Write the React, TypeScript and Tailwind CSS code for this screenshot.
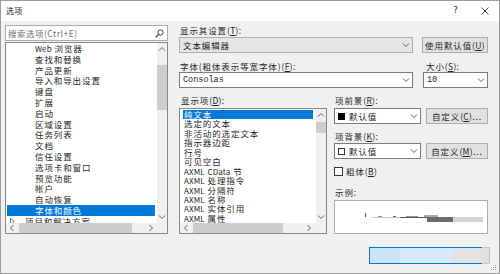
import React from "react";

type Dir = "up" | "down" | "left" | "right";

const paths: Record<Dir, string> = {
  down: "M1 2.5l3 3 3-3",
  up: "M1 5.5l3-3 3 3",
  left: "M5.5 1L2.5 4l3 3",
  right: "M2.5 1l3 3-3 3",
};

const Arrow = ({ dir, color = "#606060" }: { dir: Dir; color?: string }) => (
  <svg width="8" height="8" viewBox="0 0 8 8">
    <path d={paths[dir]} fill="none" stroke={color} strokeWidth="1" />
  </svg>
);

const Acc = ({ k }: { k: string }) => (
  <span className="tracking-[0.3px]">
    (<span className="underline">{k}</span>)
  </span>
);

const treeItems = [
  "Web 浏览器",
  "查找和替换",
  "产品更新",
  "导入和导出设置",
  "键盘",
  "扩展",
  "启动",
  "区域设置",
  "任务列表",
  "文档",
  "信任设置",
  "选项卡和窗口",
  "预览功能",
  "帐户",
  "自动恢复",
  "字体和颜色",
];

const displayItems = [
  "纯文本",
  "选定的文本",
  "非活动的选定文本",
  "指示器边距",
  "行号",
  "可见空白",
  "AXML CData 节",
  "AXML 处理指令",
  "AXML 分隔符",
  "AXML 名称",
  "AXML 实体引用",
  "AXML 属性",
];

// latin bits are narrower in the reference than the CJK glyphs
const Mixed = ({ text }: { text: string }) => {
  const parts = text.split(/([A-Za-z]+)/);
  return (
    <>
      {parts.map((p, i) =>
        /^[A-Za-z]+$/.test(p) ? (
          <span key={i} className="text-[8px] tracking-[0.1px]">
            {p}
          </span>
        ) : (
          <React.Fragment key={i}>{p}</React.Fragment>
        )
      )}
    </>
  );
};

const Combo = ({
  children,
  className,
}: {
  children: React.ReactNode;
  className: string;
}) => (
  <div className={`flex items-center h-[16px] border pl-[3px] pr-[2px] ${className}`}>
    <div className="flex-1 flex items-center min-w-0">{children}</div>
    <Arrow dir="down" />
  </div>
);

const Button = ({ children, className }: { children: React.ReactNode; className: string }) => (
  <div
    className={`flex items-center justify-center h-[16px] bg-[#e1e1e1] border border-[#adadad] ${className}`}
  >
    {children}
  </div>
);

const App = () => {
  return (
    <div className="relative w-[500px] h-[274px] bg-[#f0f0f0] border border-[#9d9d9d] overflow-hidden text-[#1e1e1e] text-[8.5px] tracking-[0.9px] font-['Noto_Sans_CJK_SC',sans-serif]">
      {/* title bar */}
      <div className="h-[20px] bg-white flex items-center pl-[5px] pr-[10px]">
        <span className="text-[8px] tracking-[0.3px] leading-[10px]">选项</span>
        <span className="ml-auto mr-[22px] text-[9px] text-[#333] font-['DejaVu_Sans',sans-serif]">?</span>
        <svg width="8" height="8" viewBox="0 0 8 8">
          <path d="M0.5 0.5l7 7M7.5 0.5l-7 7" stroke="#333" strokeWidth="0.9" />
        </svg>
      </div>

      <div className="flex">
        {/* left column */}
        <div className="ml-[4px] w-[163px]">
          <div className="mt-[4px] h-[16px] bg-white border border-[#adadad] flex items-center pl-[2px] pr-[3px]">
            <span className="text-[#6d6d6d] leading-[10px] tracking-[0.5px]">搜索选项(Ctrl+E)</span>
            <svg className="ml-auto" width="9" height="9" viewBox="0 0 9 9">
              <circle cx="5.5" cy="3.5" r="2.6" fill="none" stroke="#444" strokeWidth="1" />
              <path d="M3.6 5.4L0.8 8.2" stroke="#444" strokeWidth="1.3" />
            </svg>
          </div>
          <div className="mt-[1px] h-[192px] bg-white border border-[#828790] flex flex-col">
            <div className="flex h-[180px]">
              <div className="flex-1 overflow-hidden">
                {treeItems.map((t, i) => (
                  <div
                    key={t}
                    className={`h-[10.8px] leading-[10.8px] pl-[28px] ml-[1px] mr-[2px] whitespace-nowrap ${
                      i === treeItems.length - 1 ? "bg-[#0078d7] text-white" : ""
                    }`}
                  >
                    <Mixed text={t} />
                  </div>
                ))}
                <div className="h-[10.8px] leading-[10.8px] flex items-center whitespace-nowrap">
                  <svg className="ml-[4px] mr-[10px]" width="5" height="7" viewBox="0 0 5 7">
                    <path d="M0.5 0.5L4.2 3.5L0.5 6.5Z" fill="none" stroke="#555" strokeWidth="0.8" />
                  </svg>
                  项目和解决方案
                </div>
              </div>
              <div className="w-[10px] bg-[#f0f0f0] flex flex-col items-center">
                <div className="h-[12px] flex items-center">
                  <Arrow dir="up" />
                </div>
                <div className="mt-[10px] w-[10px] h-[45px] bg-[#cdcdcd]" />
                <div className="flex-1" />
                <div className="h-[12px] flex items-center">
                  <Arrow dir="down" />
                </div>
              </div>
            </div>
            <div className="flex h-[10px] bg-[#f0f0f0]">
              <div className="w-[12px] flex items-center justify-center">
                <Arrow dir="left" />
              </div>
              <div className="ml-[1px] w-[113px] bg-[#cdcdcd]" />
              <div className="flex-1" />
              <div className="w-[12px] flex items-center justify-center">
                <Arrow dir="right" />
              </div>
              <div className="w-[10px]" />
            </div>
          </div>
        </div>

        {/* right area */}
        <div className="ml-[11px] w-[309px] flex flex-col">
          <div className="mt-[4px] h-[10px] leading-[10px] pl-[1px]">
            显示其设置<Acc k="T" />:
          </div>
          <div className="mt-[2px] flex">
            <Combo className="w-[234px] bg-[#e5e5e5] border-[#adadad]">
              <span className="leading-[10px]">文本编辑器</span>
            </Combo>
            <Button className="ml-auto w-[66px]">
              使用默认值<Acc k="U" />
            </Button>
          </div>

          <div className="flex">
            <div className="w-[234px]">
              <div className="mt-[8px] h-[10px] leading-[10px] pl-[1px]">
                字体(粗体表示等宽字体)<Acc k="F" />:
              </div>
              <Combo className="mt-[1px] bg-white border-[#7a7a7a]">
                <span className="leading-[10px] text-[8.5px] tracking-normal font-['Liberation_Mono',monospace]">
                  Consolas
                </span>
              </Combo>
            </div>
            <div className="ml-auto w-[65px]">
              <div className="mt-[8px] h-[10px] leading-[10px] pl-[3px]">
                大小<Acc k="S" />:
              </div>
              <Combo className="mt-[1px] bg-white border-[#7a7a7a]">
                <span className="leading-[10px] text-[8.5px] tracking-normal font-['Liberation_Mono',monospace]">
                  10
                </span>
              </Combo>
            </div>
          </div>

          <div className="flex">
            {/* display items list */}
            <div className="w-[148px]">
              <div className="mt-[7px] h-[10px] leading-[10px] pl-[2px]">
                显示项<Acc k="D" />:
              </div>
              <div className="mt-[3px] h-[126px] bg-white border border-[#828790] flex flex-col">
                <div className="flex h-[114px]">
                  <div className="flex-1 overflow-hidden pt-[1px] pl-[3px] pr-[3px]">
                    {displayItems.map((t, i) => (
                      <div
                        key={t}
                        className={`h-[9.45px] leading-[9.45px] pl-[1px] whitespace-nowrap ${
                          i === 0 ? "bg-[#0078d7] text-white" : ""
                        }`}
                      >
                        <Mixed text={t} />
                      </div>
                    ))}
                  </div>
                  <div className="w-[10px] bg-[#f0f0f0] flex flex-col items-center">
                    <div className="h-[12px] flex items-center">
                      <Arrow dir="up" />
                    </div>
                    <div className="mt-[1px] w-[10px] h-[11px] bg-[#cdcdcd]" />
                    <div className="flex-1" />
                    <div className="h-[12px] flex items-center">
                      <Arrow dir="down" />
                    </div>
                  </div>
                </div>
                <div className="flex h-[10px] bg-[#f0f0f0]">
                  <div className="w-[12px] flex items-center justify-center">
                    <Arrow dir="left" />
                  </div>
                  <div className="ml-[1px] w-[90px] bg-[#cdcdcd]" />
                  <div className="flex-1" />
                  <div className="w-[14px] flex items-center justify-center">
                    <Arrow dir="right" />
                  </div>
                  <div className="w-[10px]" />
                </div>
              </div>
            </div>

            {/* colours */}
            <div className="ml-[7px] flex-1 flex flex-col">
              <div className="mt-[7px] h-[10px] leading-[10px] pl-[1px]">
                项前景<Acc k="R" />:
              </div>
              <div className="mt-[3px] flex">
                <Combo className="w-[87px] bg-white border-[#7a7a7a]">
                  <span className="w-[7px] h-[7px] bg-black mr-[4px]" />
                  <span className="leading-[10px]">默认值</span>
                </Combo>
                <Button className="ml-auto w-[62px]">
                  自定义<Acc k="C" />...
                </Button>
              </div>
              <div className="mt-[7px] h-[10px] leading-[10px] pl-[1px]">
                项背景<Acc k="K" />:
              </div>
              <div className="mt-[2px] flex">
                <Combo className="w-[87px] bg-white border-[#7a7a7a]">
                  <span className="w-[7px] h-[7px] bg-white border border-[#333] mr-[4px]" />
                  <span className="leading-[10px]">默认值</span>
                </Combo>
                <Button className="ml-auto w-[62px]">
                  自定义<Acc k="M" />...
                </Button>
              </div>
              <div className="mt-[7px] h-[10px] flex items-center">
                <span className="w-[9px] h-[9px] bg-white border border-[#333] mr-[3px]" />
                <span className="leading-[10px]">
                  粗体<Acc k="B" />
                </span>
              </div>
              <div className="mt-[11px] h-[10px] leading-[10px] pl-[1px]">示例:</div>
              <div className="mt-[3px] h-[34px] bg-white border border-[#adadad] flex flex-col items-start pl-[30px] pt-[11px]">
                <div className="h-[5px] flex items-end">
                  <span className="w-[1px] h-[4px] bg-[#555]" />
                  <span className="ml-[12px] w-[4px] h-[1px] bg-[#888]" />
                  <span className="ml-[11px] w-[3px] h-[1px] bg-[#666]" />
                  <span className="ml-[10px] w-[12px] h-[1px] bg-[#999]" />
                  <span className="ml-[6px] w-[14px] h-[2px] bg-[#aaa]" />
                </div>
                <div className="ml-[7px] flex h-[5px]">
                  <div className="w-[28px] bg-white border-t border-[#c8c8c8]" />
                  <div className="w-[27px] bg-white border-t border-[#555]" />
                  <div className="w-[26px] bg-[#6b6b6b]" />
                  <div className="w-[30px] bg-[#d4d4d4]" />
                </div>
              </div>
            </div>
          </div>
        </div>
      </div>

      {/* bottom buttons (partially drawn) */}
      <div className="mt-[13px] flex justify-end pr-[9px]">
        <div className="flex h-[17px]">
          <div className="w-[31px] bg-[#cce4f7] border-y border-l border-[#0078d7]" />
          <div className="w-[53px] bg-[#d8eaf9] border-y border-[#0078d7]" />
          <div className="w-[29px] bg-[#e3e3e3] border-y border-[#0078d7]" />
          <div className="w-[8px] bg-[#e1e1e1] border-y border-r border-[#c4c4c4]" />
        </div>
      </div>

      {/* size grip */}
      <svg className="absolute right-[2px] bottom-[2px]" width="6" height="6" viewBox="0 0 6 6">
        <rect x="4" y="0" width="1" height="1" fill="#999" />
        <rect x="2" y="2" width="1" height="1" fill="#999" />
        <rect x="4" y="2" width="1" height="1" fill="#999" />
        <rect x="0" y="4" width="1" height="1" fill="#999" />
        <rect x="2" y="4" width="1" height="1" fill="#999" />
        <rect x="4" y="4" width="1" height="1" fill="#999" />
      </svg>
    </div>
  );
};

export default App;
